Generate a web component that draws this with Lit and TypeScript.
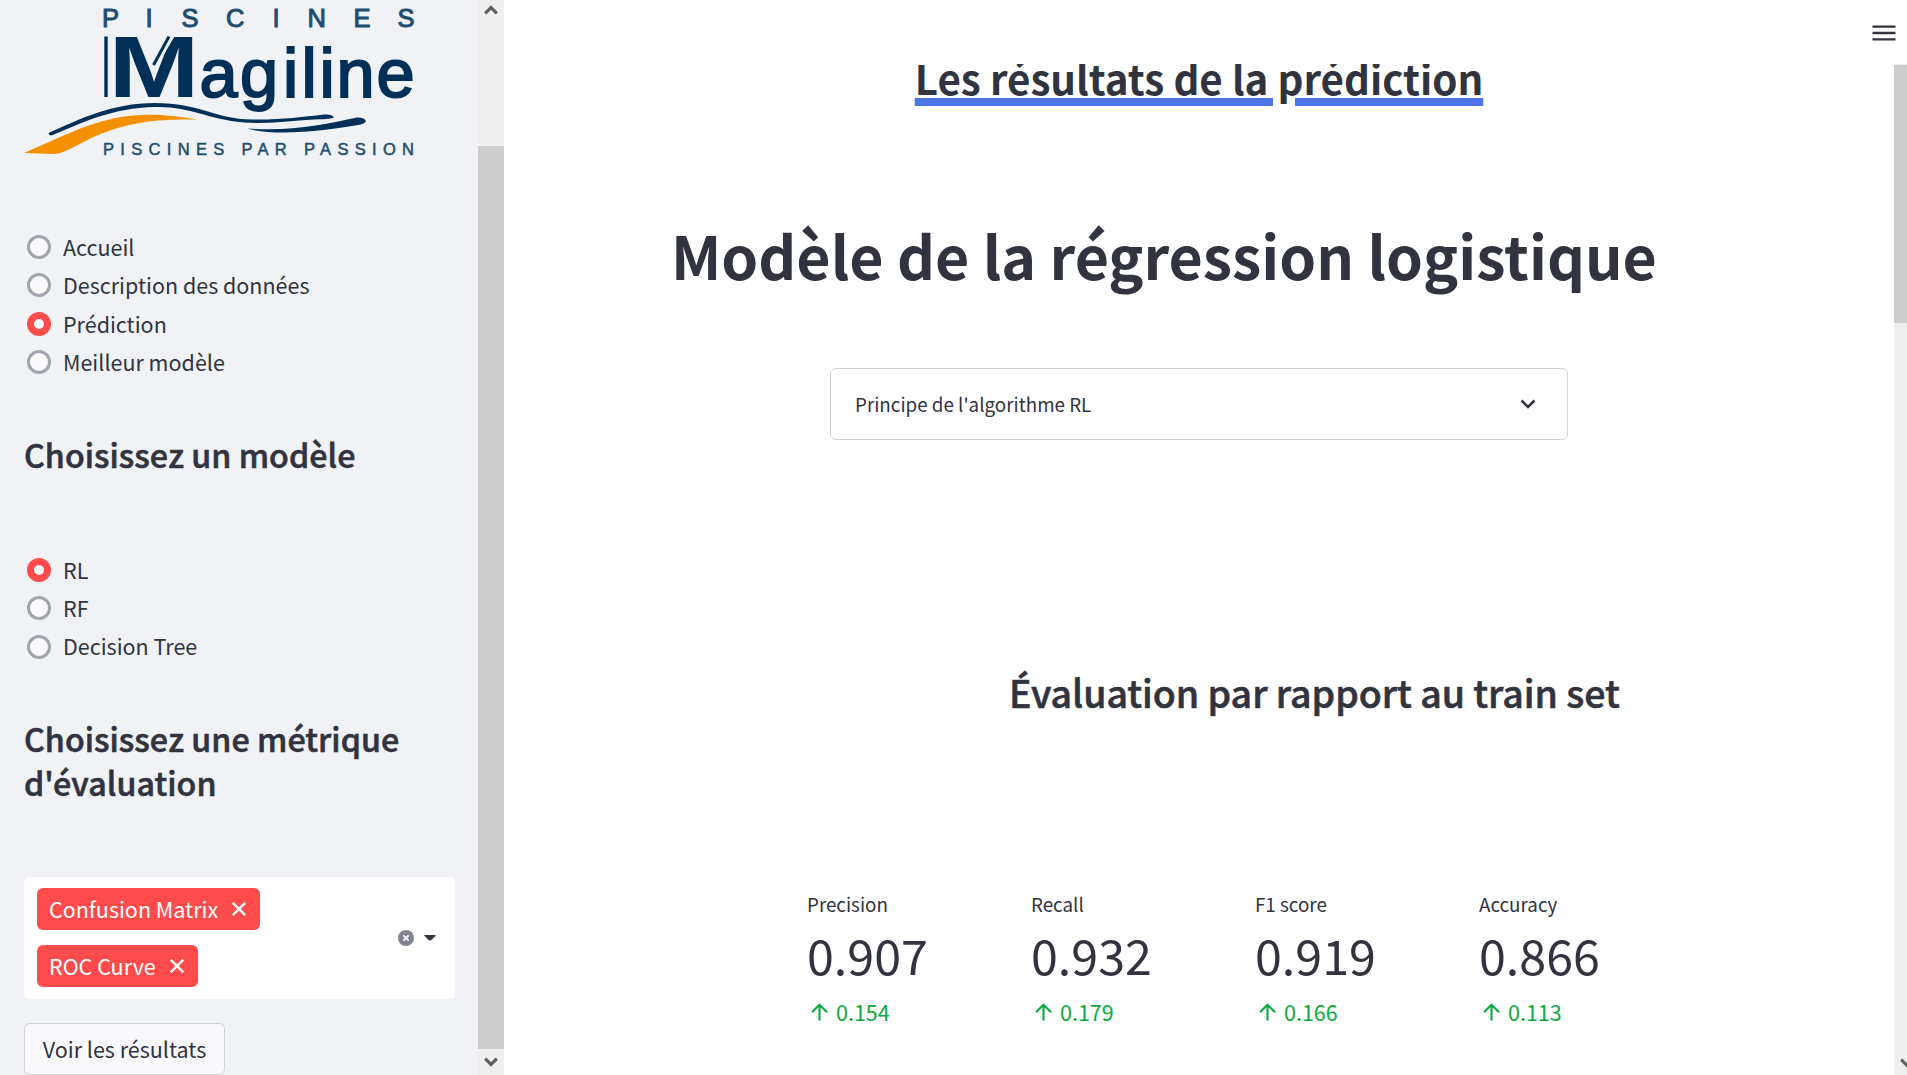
import { LitElement, html, css, svg } from "lit";
import { customElement, property } from "lit/decorators.js";

const cross = (size: number, width: number) => html`<svg width=${size} height=${size} viewBox="0 0 14 14" fill="none" stroke="currentColor" stroke-width=${width}>
  <path d="M.8 .8 13.2 13.2M13.2 .8 .8 13.2" />
</svg>`;

@customElement("brand-logo")
class BrandLogo extends LitElement {
  static styles = css`
    :host { display: block; height: 160px; }
    svg { display: block; }
    text { font-family: "Liberation Sans", Arial, sans-serif; fill: #003057; }
    .soft { fill: #1f4d72; }
  `;
  render() {
    return html`<svg width="478" height="160" viewBox="0 0 478 160">
      ${svg`
      <text class="soft" y="27" font-size="25.500" stroke="#1f4d72" stroke-width="1" x="102 145.500 181.500 226 272.500 307.500 353.500 397.500">PISCINES</text>
      <rect x="104.3" y="36.500" width="3.400" height="60.500" fill="#003057"/>
      <text x="108.500" y="97" font-size="87.500" font-weight="700" textLength="91" lengthAdjust="spacingAndGlyphs">M</text>
      <path d="M170.800 34 153 64" stroke="#f0f2f6" stroke-width="9"/>
      <path d="M169 36.500 153.500 65" stroke="#003057" stroke-width="3"/>
      <text x="199.500 240 283 301.500 319.500 336.500 376.500" y="96.800" font-size="68.500" stroke="#003057" stroke-width="2">agiline</text>
      <path d="M24 153C60 138 98 116 142 115C164 114 180 117 198 119.500C160 119 130 121 96 136C80 143 64 154 54 154C44 154 34 153 24 153Z" fill="#f59100"/>
      <path d="M48.500 133C80 119 112 103 155 103C200 103 214 119 252 119.500C280 120 302 117 324 114.500C329 114 333 115 334 117.500C330 119.500 318 119 306 120C284 122 262 124 244 122.500C206 119 190 106 155 107C112 108 84 122 51.500 135.500Q49 135.500 48.500 133Z" fill="#003057"/>
      <path d="M247 128.500C290 132 326 124 357 117.500Q364 117 366 121Q364 124.500 358 125C330 130 276 137 247 128.500Z" fill="#003057"/>
      <text class="soft" x="103" y="154.800" font-size="16.500" stroke="#1f4d72" stroke-width=".5" textLength="311" lengthAdjust="spacing">PISCINES PAR PASSION</text>`}
    </svg>`;
  }
}

@customElement("radio-group")
class RadioGroup extends LitElement {
  @property({ attribute: false }) options: string[] = [];
  @property() selected = "";
  static styles = css`
    :host { display: flex; flex-direction: column; }
    .row { display: flex; align-items: center; height: 38.4px; gap: 12px; padding-left: 27px; font-size: 21.5px; line-height: 38.4px; }
    .dot { box-sizing: border-box; width: 24px; height: 24px; border-radius: 50%; border: 3px solid #a3a5ae; background: #fafafc; }
    .on { border: 7.5px solid #ff4b4b; background: #f6f7fa; }
  `;
  render() {
    return this.options.map(
      (o) => html`<div class="row"><span class="dot ${o === this.selected ? "on" : ""}"></span><span>${o}</span></div>`
    );
  }
}

@customElement("metric-card")
class MetricCard extends LitElement {
  @property() label = "";
  @property() value = "";
  @property() delta = "";
  static styles = css`
    :host { display: block; }
    .label { font-size: 18.8px; line-height: 32px; }
    .value { font-size: 48.4px; line-height: 66px; margin-top: 1px; }
    .delta { display: flex; align-items: center; color: #09ab3b; font-size: 21.5px; line-height: 36px; margin-top: 6.5px; }
    svg { margin: 0 8px 0 4px; }
  `;
  render() {
    return html`<div class="label">${this.label}</div>
      <div class="value">${this.value}</div>
      <div class="delta">
        <svg width="17" height="18" viewBox="0 0 17 18" fill="none" stroke="currentColor" stroke-width="2.100"><path d="M8.500 17.500V1.700M1 9.300 8.500 1.800 16 9.300" /></svg>
        <span>${this.delta}</span>
      </div>`;
  }
}

@customElement("app-root")
class AppRoot extends LitElement {
  static styles = css`
    :host { display: grid; grid-template-columns: 504px 1fr; height: 1075px; overflow: hidden; background: #fff; color: #31333f; font-family: "Noto Sans CJK JP", "Noto Sans", sans-serif; }
    h1, h2, h3 { margin: 0; font-weight: 700; }
    .side { display: grid; grid-template-columns: 478px 26px; background: #f0f2f6; height: 1075px; overflow: hidden; }
    .nav { display: flex; flex-direction: column; min-width: 0; }
    .pages { margin-top: 67.8px; }
    .models { margin-top: 74.5px; }
    .nav h3 { margin: 51.6px 24px 0; font-size: 32.2px; font-weight: 500; line-height: 43.2px; letter-spacing: .05px; -webkit-text-stroke: .6px #31333f; }
    .select { box-sizing: border-box; display: flex; align-items: center; margin: 73.5px 23px 0 24px; height: 122px; flex: none; padding: 0 19px 0 13px; background: #fff; border-radius: 5px; }
    .tags { flex: 1; display: flex; flex-direction: column; align-items: flex-start; gap: 15px; margin-top: -2px; }
    .tag { display: flex; align-items: center; gap: 14px; height: 42px; padding: 0 14px 0 12px; border-radius: 6px; background: #ff4b4b; color: #fff; font-size: 21.5px; line-height: 42px; }
    .clear { display: flex; align-items: center; justify-content: center; width: 16px; height: 16px; border-radius: 50%; background: #808495; color: #fff; margin-right: 10px; }
    .run { box-sizing: border-box; align-self: flex-start; flex: none; margin: 24px 0 0 24px; width: 201px; height: 52px; border: 1px solid #d0d2d8; border-radius: 6px; background: #f9f9fb; color: inherit; font: 21.500px/50px "Noto Sans CJK JP", sans-serif; padding: 0; text-align: center; }
    .bar { display: flex; flex-direction: column; background: #efefef; }
    .bar .end { height: 26px; display: flex; align-items: center; justify-content: center; }
    .bar .up { height: 146px; align-items: flex-start; padding-top: 5px; box-sizing: border-box; }
    .bar .thumb { flex: 1; background: #cdcdcd; }
    .main { display: grid; grid-template-columns: 1fr 13px; grid-template-rows: 64px 1fr; height: 1075px; min-width: 0; overflow: hidden; }
    .top { grid-column: 1 / 3; position: relative; z-index: 2; background: #fff; display: flex; justify-content: flex-end; align-items: flex-start; padding: 25px 11px 0 0; box-sizing: border-box; }
    .body { display: flex; flex-direction: column; padding-left: 326px; min-width: 0; }
    .block { width: 738px; }
    .title { margin-top: -16px; font-size: 40.3px; line-height: 60px; text-align: center; white-space: nowrap; text-decoration: underline 8px #4b74e4; text-underline-offset: 3px; }
    .headline { margin: 107px 0 0 -159px; font-size: 59.05px; line-height: 80px; white-space: nowrap; }
    .expander { box-sizing: border-box; display: flex; align-items: center; justify-content: space-between; margin-top: 73px; height: 72px; padding: 0 31px 0 24px; border: 1px solid #d3d3d6; border-radius: 6px; font-size: 18.8px; }
    .expander span { margin-top: -1px; }
    .eval { margin: 228px 0 0 179px; font-size: 37.5px; font-weight: 500; line-height: 48px; white-space: nowrap; letter-spacing: -.05px; -webkit-text-stroke: .6px #31333f; }
    .metrics { display: grid; grid-template-columns: repeat(4, 224px); margin: 172px 0 0 -23px; }
    .rail { background: #efefef; padding-top: 1px; display: flex; flex-direction: column; justify-content: space-between; overflow: hidden; }
    .rail .thumb { height: 258px; background: #cdcdcd; }
    .rail svg { margin: 0 0 7px 6px; flex: none; }
  `;

  render() {
    const chevron = (d: string) => html`<svg width="14" height="10" viewBox="0 0 14 10" fill="none" stroke="#606060" stroke-width="3.200"><path d=${d} /></svg>`;
    const down = "M1.200 1.600 7 7.400 12.800 1.600";
    const up = "M1.200 8.400 7 2.600 12.800 8.400";
    return html`
      <aside class="side">
        <div class="nav">
          <brand-logo></brand-logo>
          <radio-group class="pages" .options=${["Accueil", "Description des données", "Prédiction", "Meilleur modèle"]} selected="Prédiction"></radio-group>
          <h3>Choisissez un modèle</h3>
          <radio-group class="models" .options=${["RL", "RF", "Decision Tree"]} selected="RL"></radio-group>
          <h3>Choisissez une métrique d'évaluation</h3>
          <div class="select">
            <div class="tags">
              ${["Confusion Matrix", "ROC Curve"].map((t) => html`<span class="tag">${t}${cross(14, 2.4)}</span>`)}
            </div>
            <span class="clear">${cross(6, 4)}</span>
            <svg width="12" height="6" viewBox="0 0 12 6"><path d="M.5 0H11.500Q12 .5 11.200 1.200L7 5.200Q6 6 5 5.200L.8 1.200Q0 .5 .5 0Z" fill="#31333f" /></svg>
          </div>
          <button class="run">Voir les résultats</button>
        </div>
        <div class="bar">
          <div class="end up">${chevron(up)}</div>
          <div class="thumb"></div>
          <div class="end">${chevron(down)}</div>
        </div>
      </aside>
      <main class="main">
        <header class="top">
          <svg width="24" height="17" viewBox="0 0 24 17" stroke="#31333f" stroke-width="2.300"><path d="M.5 1.700H23.500M.5 8H23.500M.5 14.400H23.500" /></svg>
        </header>
        <div class="body">
          <h2 class="title block">Les résultats de la prédiction</h2>
          <h1 class="headline">Modèle de la régression logistique</h1>
          <div class="expander block">
            <span>Principe de l'algorithme RL</span>
            <svg width="16" height="10" viewBox="0 0 16 10" fill="none" stroke="#31333f" stroke-width="2.500"><path d="M1.500 1.500 8 8 14.500 1.500" /></svg>
          </div>
          <h2 class="eval">Évaluation par rapport au train set</h2>
          <div class="metrics">
            <metric-card label="Precision" value="0.907" delta="0.154"></metric-card>
            <metric-card label="Recall" value="0.932" delta="0.179"></metric-card>
            <metric-card label="F1 score" value="0.919" delta="0.166"></metric-card>
            <metric-card label="Accuracy" value="0.866" delta="0.113"></metric-card>
          </div>
        </div>
        <div class="rail">
          <div class="thumb"></div>
          ${chevron(down)}
        </div>
      </main>`;
  }
}
